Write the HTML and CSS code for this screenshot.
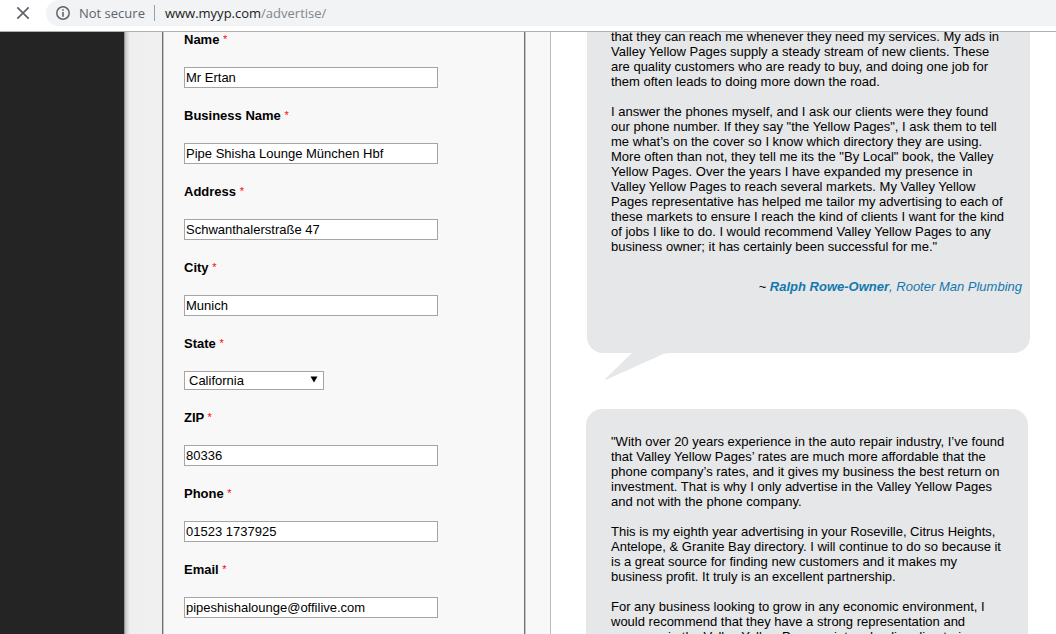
FILE: index.html
```html
<!DOCTYPE html>
<html lang="en">
<head>
<meta charset="utf-8">
<title>Advertise</title>
<link rel="stylesheet" href="styles.css">
</head>
<body>
<header class="toolbar">
  <button class="stop" type="button" aria-label="Stop loading">
    <svg width="14" height="14" viewBox="0 0 14 14"><path d="M1.300 1.300l11.400 11.400M12.700 1.300l-11.400 11.400" stroke="#5f6368" stroke-width="1.700" fill="none"/></svg>
  </button>
  <div class="omnibox">
    <svg width="14" height="14" viewBox="0 0 14 14"><circle cx="7" cy="7" r="6.200" fill="none" stroke="#5f6368" stroke-width="1.500"/><path d="M6.200 3.300h1.600v1.500H6.200zM6.200 6.100h1.600v4.600H6.200z" fill="#5f6368"/></svg>
    <span class="security">Not secure</span>
    <span class="url">www.myyp.com<span class="path">/advertise/</span></span>
  </div>
</header>
<main class="page">
  <div class="backdrop"></div>
  <div class="column">
    <form class="form">
      <div class="field"><label for="name">Name <span class="req">*</span></label><input id="name" type="text" value="Mr Ertan"></div>
      <div class="field"><label for="business">Business Name <span class="req">*</span></label><input id="business" type="text" value="Pipe Shisha Lounge München Hbf"></div>
      <div class="field"><label for="address">Address <span class="req">*</span></label><input id="address" type="text" value="Schwanthalerstraße 47"></div>
      <div class="field"><label for="city">City <span class="req">*</span></label><input id="city" type="text" value="Munich"></div>
      <div class="field"><label for="state">State <span class="req">*</span></label>
        <div class="select"><select id="state"><option>California</option></select><svg width="8" height="7" viewBox="0 0 8 7"><path d="M0.500 0.500h7l-3.500 6z" fill="#000"/></svg></div></div>
      <div class="field"><label for="zip">ZIP <span class="req">*</span></label><input id="zip" type="text" value="80336"></div>
      <div class="field"><label for="phone">Phone <span class="req">*</span></label><input id="phone" type="text" value="01523 1737925"></div>
      <div class="field"><label for="email">Email <span class="req">*</span></label><input id="email" type="text" value="pipeshishalounge@offilive.com"></div>
    </form>
  </div>
  <section class="testimonials">
    <article class="bubble first">
      <p>that they can reach me whenever they need my services. My ads in<br>Valley Yellow Pages supply a steady stream of new clients. These<br>are quality customers who are ready to buy, and doing one job for<br>them often leads to doing more down the road.</p>
      <p>I answer the phones myself, and I ask our clients were they found<br>our phone number. If they say "the Yellow Pages", I ask them to tell<br>me what’s on the cover so I know which directory they are using.<br>More often than not, they tell me its the "By Local" book, the Valley<br>Yellow Pages. Over the years I have expanded my presence in<br>Valley Yellow Pages to reach several markets. My Valley Yellow<br>Pages representative has helped me tailor my advertising to each of<br>these markets to ensure I reach the kind of clients I want for the kind<br>of jobs I like to do. I would recommend Valley Yellow Pages to any<br>business owner; it has certainly been successful for me."</p>
      <p class="signature">~ <em><strong>Ralph Rowe-Owner</strong>, Rooter Man Plumbing</em></p>
      <svg class="tail" width="68" height="28" viewBox="0 0 68 28"><path d="M28 0L0.500 26.500Q3 26.500 6 25L57 2Q61 0 66 0z" fill="#e6e7e8"/></svg>
    </article>
    <article class="bubble second">
      <p>"With over 20 years experience in the auto repair industry, I’ve found<br>that Valley Yellow Pages’ rates are much more affordable that the<br>phone company’s rates, and it gives my business the best return on<br>investment. That is why I only advertise in the Valley Yellow Pages<br>and not with the phone company.</p>
      <p>This is my eighth year advertising in your Roseville, Citrus Heights,<br>Antelope, &amp; Granite Bay directory. I will continue to do so because it<br>is a great source for finding new customers and it makes my<br>business profit. It truly is an excellent partnership.</p>
      <p>For any business looking to grow in any economic environment, I<br>would recommend that they have a strong representation and<br>presence in the Valley Yellow Pages print and online directories.</p>
    </article>
  </section>
</main>
</body>
</html>
```
FILE: styles.css
```css
* { box-sizing: border-box; }
body {
  margin: 0;
  height: 100vh;
  overflow: hidden;
  display: flex;
  flex-direction: column;
  background: #fff;
  color: #000;
  font: 13px/15px "Liberation Sans", Arial, sans-serif;
}
.toolbar {
  flex: none;
  display: flex;
  height: 32px;
  padding-bottom: 5px;
  border-bottom: 1px solid #b0b0b0;
  overflow: hidden;
}
.stop {
  display: flex;
  align-items: center;
  justify-content: center;
  width: 46px;
  padding: 0;
  border: 0;
  background: none;
}
.omnibox {
  flex: 1;
  display: flex;
  align-items: center;
  padding-left: 10px;
  border-radius: 14px 0 0 14px;
  background: #f1f3f4;
  font: 13px/16px "Open Sans", "Noto Sans", sans-serif;
}
.security {
  margin-left: 9px;
  padding-right: 9px;
  border-right: 1px solid #9aa0a6;
  color: #5f6368;
}
.url { margin-left: 10px; color: #202124; }
.path { color: #80868b; }
.page { flex: 1; min-height: 0; display: flex; overflow: hidden; }
.backdrop { flex: none; width: 124px; background: #242424; }
.column {
  flex: none;
  width: 427px;
  padding: 0 25px 0 38px;
  border-right: 1px solid #bbb;
  background: linear-gradient(to right, #707070 0, #bbb 1px, #d8d8d8 3px, #efefef 6px, #f0f0f0 38px, #f8f8f8 38px);
}
.form {
  display: flex;
  flex-direction: column;
  gap: 20px;
  height: 100%;
  padding-left: 21px;
  border: solid #707070;
  border-width: 0 1px;
  box-shadow: inset 1px 0 #c4c4c4, 1px 0 #c4c4c4;
  background: #f8f8f8;
}
.field { display: flex; flex-direction: column; align-items: flex-start; gap: 20px; }
.field label { font-weight: bold; }
.req { color: #f00; font-size: 11px; font-weight: normal; line-height: 11px; vertical-align: 1px; }
.field input {
  width: 254px;
  height: 21px;
  padding: 1px;
  border: 1px solid #a5a5a5;
  border-radius: 0;
  background: #fff;
  color: #000;
  font: 13px "Liberation Sans", Arial, sans-serif;
}
.select { position: relative; width: 140px; height: 19px; }
.select select {
  width: 100%;
  height: 100%;
  padding: 0 4px;
  appearance: none;
  border: 1px solid #a5a5a5;
  border-radius: 0;
  background: #fff;
  color: #000;
  font: 13px "Liberation Sans", Arial, sans-serif;
}
.select svg { position: absolute; right: 6px; top: 5px; pointer-events: none; }
.testimonials { flex: 1; padding: 0 26px 0 36px; white-space: nowrap; }
.bubble { position: relative; background: #e6e7e8; }
.bubble p { margin: 0 0 15px; }
.first {
  margin-top: -3px;
  padding: 0 8px 44px 24px;
  border-radius: 0 0 16px 16px;
}
.second { margin: 56px 2px 0 -1px; padding: 25px 0 0 25px; border-radius: 16px 16px 0 0; }
.bubble .signature { padding-top: 10px; text-align: right; }
.signature em { color: #1278b0; }
.tail { position: absolute; left: 17px; top: 100%; }
```
